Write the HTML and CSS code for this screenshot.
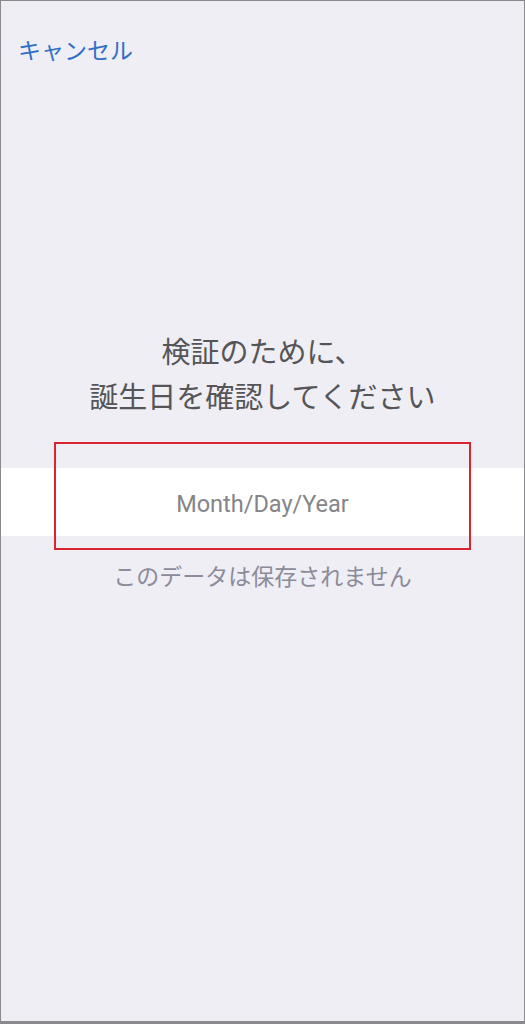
FILE: index.html
```html
<!DOCTYPE html>
<html lang="ja">
<head>
    <meta charset="UTF-8">
    <meta name="viewport" content="width=device-width, initial-scale=1.0">
    <title>誕生日の確認</title>
    <link rel="stylesheet" href="styles.css">
</head>
<body>
    <div class="screen">
        <div class="top-bar">
            <a class="cancel" href="#">キャンセル</a>
        </div>

        <h1 class="title">検証のために、<br>誕生日を確認してください</h1>

        <div class="field">
            <div class="field-input">Month/Day/Year</div>
            <div class="highlight"></div>
        </div>

        <p class="note">このデータは保存されません</p>
    </div>
</body>
</html>
```

FILE: styles.css
```css
html, body {
    margin: 0;
    padding: 0;
}
body {
    font-family: "Noto Sans CJK JP", "Noto Sans", sans-serif;
    background-color: #efeef4;
}
.screen {
    box-sizing: border-box;
    height: 1024px;
    border: 1px solid #8a8a8e;
    border-bottom-width: 3px;
    background-color: #efeef4;
    display: flex;
    flex-direction: column;
}
.top-bar {
    padding: 33px 0 0 17px;
}
.cancel {
    color: #2f6fc6;
    text-decoration: none;
    font-size: 23px;
    line-height: 30px;
}
.title {
    margin: 264px 0 0;
    text-align: center;
    font-size: 29px;
    font-weight: normal;
    line-height: 45px;
    color: #555558;
}
.field {
    position: relative;
    margin-top: 50px;
}
.field-input {
    height: 68px;
    padding-top: 3px;
    box-sizing: border-box;
    background-color: #fff;
    display: flex;
    align-items: center;
    justify-content: center;
    font-family: Roboto, sans-serif;
    font-size: 23.5px;
    color: #858588;
}
/* red annotation box over the field */
.highlight {
    position: absolute;
    left: 53px;
    top: -26px;
    width: 417px;
    height: 108px;
    box-sizing: border-box;
    border: 2px solid #d9262e;
}
.note {
    margin: 24px 0 0;
    text-align: center;
    font-size: 23px;
    line-height: 30px;
    color: #8c8b99;
}
```
